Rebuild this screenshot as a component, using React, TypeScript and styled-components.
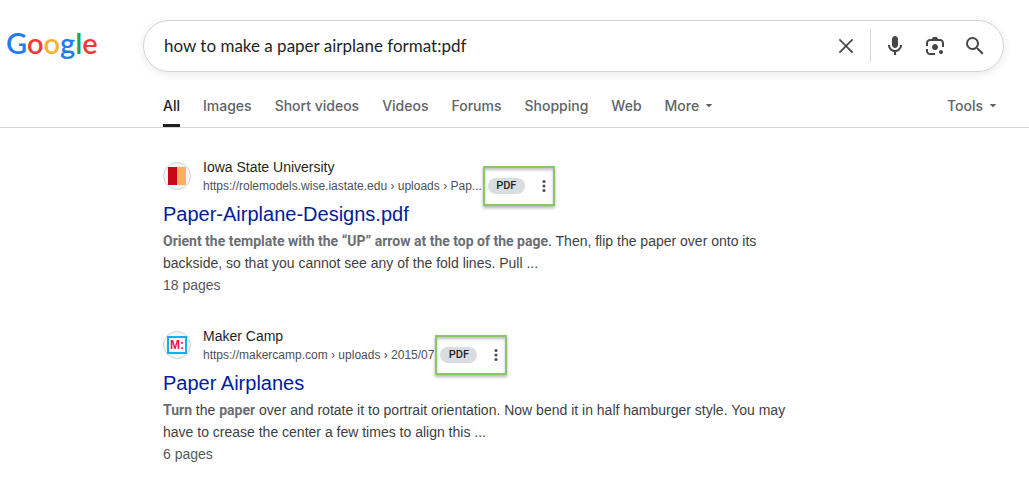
import React from "react";
import styled, { createGlobalStyle } from "styled-components";

const GlobalStyle = createGlobalStyle`
  * { box-sizing: border-box; }
  body {
    margin: 0;
    background: #fff;
    color: #1f1f1f;
    font-family: "Liberation Sans", Arial, sans-serif;
    font-size: 14px;
  }
  button { padding: 0; border: 0; background: none; font: inherit; color: inherit; cursor: pointer; }
  a { color: inherit; text-decoration: none; }
`;

const Header = styled.header`
  display: flex;
  align-items: center;
  padding: 20px 25px 0 6px;
`;

const Logo = styled.a`
  flex: 0 0 137px;
  height: 52px;
  font-family: Lato, sans-serif;
  font-size: 29px;
  font-weight: 600;
  line-height: 46px;
`;

const Letter = styled.span<{ $color: string }>`
  color: ${(p) => p.$color};
`;

const SearchBox = styled.form`
  display: flex;
  align-items: center;
  flex: 1;
  min-width: 0;
  height: 52px;
  padding: 0 8px 0 20px;
  border: 1px solid #d2d4d8;
  border-radius: 26px;
  box-shadow: 0 2px 8px rgba(60, 64, 67, 0.12);
`;

const SearchInput = styled.input`
  flex: 1;
  min-width: 0;
  height: 32px;
  padding: 0 0 2px;
  border: 0;
  outline: 0;
  background: none;
  color: #1f1f1f;
  font-family: Lato, sans-serif;
  font-size: 17px;
`;

const IconButton = styled.button`
  display: grid;
  place-items: center;
  width: 40px;
  height: 40px;
  color: #444746;
`;

const Divider = styled.span`
  width: 1px;
  height: 32px;
  margin: 0 4px;
  background: #d2d4d8;
`;

const TabBar = styled.nav`
  display: flex;
  justify-content: space-between;
  height: 56px;
  padding: 14px 32px 0 163px;
  border-bottom: 1px solid #d2d4d8;
  font-family: Inter, sans-serif;
  font-size: 14px;
  font-weight: 500;
  line-height: 40px;
  color: #5f6368;
`;

const TabList = styled.div`
  display: flex;
  gap: 23px;
`;

const Tab = styled.a<{ $active?: boolean }>`
  height: 41px;
  white-space: nowrap;
  color: ${(p) => (p.$active ? "#1f1f1f" : "inherit")};
  border-bottom: 3px solid ${(p) => (p.$active ? "#1f1f1f" : "transparent")};
`;

const MenuButton = styled.button`
  display: flex;
  align-items: center;
  gap: 6px;
  height: 40px;
`;

const Results = styled.main`
  display: flex;
  flex-direction: column;
  gap: 30px;
  max-width: 815px;
  padding: 29px 0 12px 163px;
`;

const Source = styled.div`
  display: flex;
  align-items: center;
  gap: 12px;
`;

const Favicon = styled.span`
  display: grid;
  place-items: center;
  flex: none;
  width: 28px;
  height: 28px;
  border: 1px solid #d2d4d8;
  border-radius: 50%;
  background: #f3f5f6;
`;

const StateMark = styled.span`
  width: 18px;
  height: 18px;
  background: linear-gradient(90deg, #c8071b 50%, #fbae60 50%);
`;

const MakerMark = styled.span`
  width: 20px;
  height: 18px;
  border: 2px solid #1cade4;
  background: #fff;
  color: #ee1340;
  font-size: 12px;
  font-weight: 700;
  line-height: 14px;
  text-align: center;
`;

const SiteName = styled.div`
  line-height: 20px;
`;

const UrlRow = styled.div`
  display: flex;
  align-items: center;
  gap: 6px;
  height: 18px;
  font-size: 12px;
  line-height: 18px;
  color: #4d5156;
  white-space: nowrap;
`;

const FileActions = styled.div`
  position: relative;
  display: flex;
  align-items: center;
  gap: 12px;
  height: 16px;

  &::after {
    content: "";
    position: absolute;
    inset: -12px -4px -12px -5px;
    border: 2px solid #87c961;
    box-shadow: 0 2px 3px rgba(0, 0, 0, 0.3), inset 0 2px 3px rgba(0, 0, 0, 0.25);
    pointer-events: none;
  }
`;

const FileType = styled.span`
  width: 37px;
  border-radius: 8px;
  background: #dadde0;
  color: #1f1f1f;
  font-family: Roboto, sans-serif;
  font-size: 11px;
  font-weight: 500;
  line-height: 16px;
  text-align: center;
`;

const MoreButton = styled.button`
  display: grid;
  place-items: center;
  width: 14px;
  height: 16px;
  color: #4d5156;
`;

const Title = styled.h3`
  margin: 6px 0 3px;
  font-size: 20px;
  font-weight: 400;
  line-height: 26px;
  color: #001d9c;
`;

const Snippet = styled.p`
  margin: 0;
  line-height: 22px;
  color: #3c3f43;
`;

const Match = styled.em`
  font-family: Roboto, sans-serif;
  font-style: normal;
  font-weight: 700;
  color: #6b6e72;
`;

const Pages = styled.div`
  line-height: 22px;
  color: #55585c;
`;

const Caret = () => (
  <svg width="8" height="4" viewBox="0 0 8 4" fill="currentColor" aria-hidden="true">
    <path d="M.8 0h6.4L4 3.4z" />
  </svg>
);

const CloseIcon = () => (
  <svg width="24" height="24" viewBox="0 0 24 24" fill="none" stroke="currentColor" strokeWidth="1.7" aria-hidden="true">
    <path d="M5.4 5.4l13.2 13.2M18.6 5.4L5.4 18.6" />
  </svg>
);

const MicIcon = () => (
  <svg width="24" height="24" viewBox="0 0 24 24" fill="currentColor" aria-hidden="true">
    <path d="M12 14c1.66 0 3-1.34 3-3V5c0-1.66-1.34-3-3-3S9 3.34 9 5v6c0 1.66 1.34 3 3 3z" />
    <path d="M17 11c0 2.76-2.24 5-5 5s-5-2.24-5-5H5c0 3.53 2.61 6.43 6 6.92V21h2v-3.08c3.39-.49 6-3.39 6-6.92h-2z" />
  </svg>
);

const LensIcon = () => (
  <svg width="24" height="24" viewBox="0 -960 960 960" fill="currentColor" aria-hidden="true">
    <path d="M480-320q-50 0-85-35t-35-85q0-50 35-85t85-35q50 0 85 35t35 85q0 50-35 85t-85 35Zm240 160q-33 0-56.5-23.5T640-240q0-33 23.5-56.5T720-320q33 0 56.5 23.5T800-240q0 33-23.5 56.5T720-160Zm-440 40q-66 0-113-47t-47-113v-80h80v80q0 33 23.5 56.5T280-200h200v80H280Zm480-320v-160q0-33-23.5-56.5T680-680H280q-33 0-56.5 23.5T200-600v120h-80v-120q0-66 47-113t113-47h80l40-80h160l40 80h80q66 0 113 47t47 113v160h-80Z" />
  </svg>
);

const SearchIcon = () => (
  <svg width="24" height="24" viewBox="0 0 24 24" fill="currentColor" aria-hidden="true">
    <path d="M15.5 14h-.79l-.28-.27A6.471 6.471 0 0 0 16 9.5 6.5 6.5 0 1 0 9.5 16c1.61 0 3.09-.59 4.23-1.57l.27.28v.79l5 4.99L20.49 19l-4.99-5zm-6 0C7.01 14 5 11.99 5 9.5S7.01 5 9.5 5 14 7.01 14 9.5 11.99 14 9.5 14z" />
  </svg>
);

const DotsIcon = () => (
  <svg width="4" height="14" viewBox="0 0 4 14" fill="currentColor" aria-hidden="true">
    <circle cx="2" cy="2.5" r="1.6" />
    <circle cx="2" cy="7" r="1.6" />
    <circle cx="2" cy="11.5" r="1.6" />
  </svg>
);

const logoLetters = [
  ["G", "#1f7cf2"],
  ["o", "#f03a35"],
  ["o", "#fbb12f"],
  ["g", "#1f7cf2"],
  ["l", "#1fa055"],
  ["e", "#f03a35"],
];

const tabs = ["All", "Images", "Short videos", "Videos", "Forums", "Shopping", "Web"];

type ResultProps = {
  icon: React.ReactNode;
  site: string;
  url: string;
  title: string;
  pages: string;
  children: React.ReactNode;
};

const Result = ({ icon, site, url, title, pages, children }: ResultProps) => (
  <article>
    <Source>
      <Favicon>{icon}</Favicon>
      <div>
        <SiteName>{site}</SiteName>
        <UrlRow>
          <span>{url}</span>
          <FileActions>
            <FileType>PDF</FileType>
            <MoreButton type="button" aria-label={`About ${title}`}>
              <DotsIcon />
            </MoreButton>
          </FileActions>
        </UrlRow>
      </div>
    </Source>
    <Title>
      <a href="#result">{title}</a>
    </Title>
    <Snippet>{children}</Snippet>
    <Pages>{pages}</Pages>
  </article>
);

export default function App() {
  return (
    <>
      <GlobalStyle />
      <Header>
        <Logo href="#home">
          {logoLetters.map(([letter, color], i) => (
            <Letter key={i} $color={color}>{letter}</Letter>
          ))}
        </Logo>
        <SearchBox role="search" onSubmit={(e) => e.preventDefault()}>
          <SearchInput aria-label="Search" defaultValue="how to make a paper airplane format:pdf" />
          <IconButton type="reset" aria-label="Clear"><CloseIcon /></IconButton>
          <Divider />
          <IconButton type="button" aria-label="Search by voice"><MicIcon /></IconButton>
          <IconButton type="button" aria-label="Search by image"><LensIcon /></IconButton>
          <IconButton type="submit" aria-label="Search"><SearchIcon /></IconButton>
        </SearchBox>
      </Header>
      <TabBar>
        <TabList>
          {tabs.map((tab, i) => (
            <Tab key={tab} href="#tab" $active={i === 0}>{tab}</Tab>
          ))}
          <MenuButton type="button">More <Caret /></MenuButton>
        </TabList>
        <MenuButton type="button">Tools <Caret /></MenuButton>
      </TabBar>
      <Results>
        <Result
          icon={<StateMark />}
          site="Iowa State University"
          url="https://rolemodels.wise.iastate.edu › uploads › Pap..."
          title="Paper-Airplane-Designs.pdf"
          pages="18 pages"
        >
          <Match>Orient the template with the “UP” arrow at the top of the page</Match>. Then, flip the paper
          over onto its backside, so that you cannot see any of the fold lines. Pull ...
        </Result>
        <Result
          icon={<MakerMark>M:</MakerMark>}
          site="Maker Camp"
          url="https://makercamp.com › uploads › 2015/07"
          title="Paper Airplanes"
          pages="6 pages"
        >
          <Match>Turn</Match> the <Match>paper</Match> over and rotate it to portrait orientation. Now bend it
          in half hamburger style. You may have to crease the center a few times to align this ...
        </Result>
      </Results>
    </>
  );
}
